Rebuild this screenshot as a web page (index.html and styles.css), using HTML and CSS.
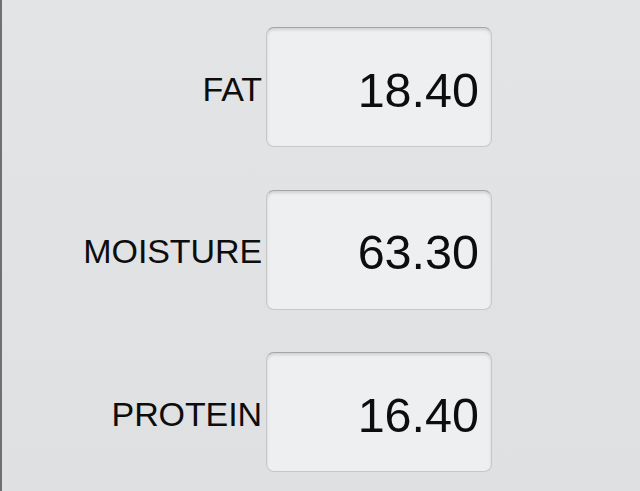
FILE: index.html
```html
<!DOCTYPE html>
<html lang="en">
<head>
    <meta charset="UTF-8">
    <meta name="viewport" content="width=device-width, initial-scale=1.0">
    <title>Analysis Results</title>
    <link rel="stylesheet" href="styles.css">
</head>
<body>
    <div class="panel">
        <div class="reading">
            <span class="reading-label">FAT</span>
            <div class="reading-box">18.40</div>
        </div>
        <div class="reading">
            <span class="reading-label">MOISTURE</span>
            <div class="reading-box">63.30</div>
        </div>
        <div class="reading">
            <span class="reading-label">PROTEIN</span>
            <div class="reading-box">16.40</div>
        </div>
    </div>
</body>
</html>
```

FILE: styles.css
```css
html, body {
    margin: 0;
    height: 100%;
}

body {
    font-family: "Liberation Sans", Arial, sans-serif;
    background-color: #e1e2e3;
    color: #0d0d0d;
}

.panel {
    height: 100%;
    box-sizing: border-box;
    border-left: 2px solid #707070;
    padding-top: 27px;
    display: flex;
    flex-direction: column;
    gap: 42.5px;
    background: linear-gradient(180deg, #e3e4e5 0%, #dfe0e1 100%);
}

.reading {
    display: grid;
    grid-template-columns: 260px 226px;
    column-gap: 4px;
    align-items: center;
}

.reading-label {
    text-align: right;
    font-size: 34px;
    letter-spacing: -0.1px;
    padding-top: 4px;
}

.reading-box {
    height: 120px;
    box-sizing: border-box;
    border: 1px solid #c6c7c9;
    border-top-color: #a4a5a7;
    border-radius: 8px;
    background-color: #eeeff1;
    box-shadow: inset 0 2px 3px rgba(0, 0, 0, 0.12);
    display: flex;
    align-items: center;
    justify-content: flex-end;
    padding: 5px 12px 0 0;
    font-size: 48.5px;
}
```
